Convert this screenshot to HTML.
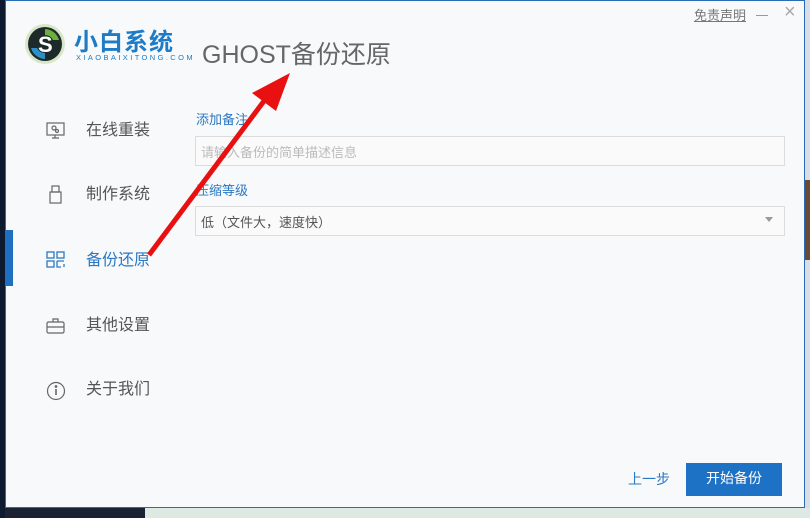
<!DOCTYPE html>
<html><head><meta charset="utf-8"><style>
*{margin:0;padding:0;box-sizing:border-box}
body{width:810px;height:518px;overflow:hidden;background:#1b2233;position:relative;font-family:"Liberation Sans","Noto Sans CJK SC",sans-serif}
.win{position:absolute;left:5px;top:0;width:800px;height:508px;background:#f8f9fa;border:1px solid #2a6cb8}
.t{position:absolute;white-space:nowrap}
.nav{position:absolute;left:80px;font-size:16px;color:#555}
.ic{position:absolute;left:40px}
.inp{position:absolute;left:189px;width:590px;height:30px;border:1px solid #dcdcdc;background:#fafafa;font-size:13px;color:#bbb;padding:5px 5px}
</style></head><body>
<div style="position:absolute;left:0;top:0;width:5px;height:518px;background:#0e1a30"></div>
<div style="position:absolute;left:805px;top:0;width:5px;height:518px;background:#d9dde4"></div>
<div style="position:absolute;left:805px;top:180px;width:5px;height:80px;background:#6a4a30"></div>
<div style="position:absolute;left:145px;top:508px;width:665px;height:10px;background:#dfe9e4"></div>
<div class="win">
 <svg style="position:absolute;left:18px;top:22px" width="42" height="42" viewBox="0 0 42 42"><circle cx="21" cy="21" r="20" fill="#d8e6c8"/><circle cx="21" cy="21" r="17" fill="#1c2a2a"/><path d="M21 6a15 15 0 0 1 14 11l-6 0a9 9 0 0 0-8-5z" fill="#6cb03a"/><path d="M21 36a15 15 0 0 1-14-11l6 0a9 9 0 0 0 8 5z" fill="#2e8fc8"/><text x="14" y="29" font-size="22" fill="#fff" font-weight="bold" font-family="Liberation Sans">S</text></svg>
 <div class="t" style="left:68px;top:21px;font-size:24px;color:#1e7bc6;font-weight:bold;letter-spacing:1px">小白系统</div>
 <div class="t" style="left:70px;top:52px;font-size:7.5px;color:#1e7bc6;letter-spacing:2.4px">XIAOBAIXITONG.COM</div>
 <div class="t" style="left:196px;top:34px;font-size:25px;color:#666">GHOST备份还原</div>
 <div class="t" style="left:688px;top:4px;font-size:13px;color:#777;text-decoration:underline">免责声明</div>
 <div style="position:absolute;left:750px;top:14px;width:12px;height:1px;background:#999"></div>
 <div class="t" style="left:778px;top:0px;font-size:20px;color:#aaa">×</div>

 <div style="position:absolute;left:0;top:229px;width:7px;height:56px;background:#1e6fc0"></div>
 <svg class="ic" style="top:121px" width="20" height="18" viewBox="0 0 20 18" fill="none" stroke="#666" stroke-width="1.2"><rect x="1" y="1" width="17" height="12"/><circle cx="8" cy="6" r="2"/><circle cx="11" cy="9" r="1.5"/><path d="M9 13v3M6 16h7"/></svg>
 <div class="nav" style="top:115px">在线重装</div>
 <svg class="ic" style="top:184px" width="20" height="20" viewBox="0 0 20 20" fill="none" stroke="#666" stroke-width="1.2"><rect x="6" y="1" width="7" height="6"/><rect x="4" y="7" width="11" height="11"/></svg>
 <div class="nav" style="top:179px">制作系统</div>
 <svg class="ic" style="top:250px" width="20" height="18" viewBox="0 0 20 18" fill="none" stroke="#2a78c2" stroke-width="1.3"><rect x="1" y="1" width="7" height="6"/><rect x="11" y="1" width="7" height="6"/><rect x="1" y="10" width="7" height="6"/><path d="M11 10h7M11 10v6h4M18 13v3"/></svg>
 <div class="nav" style="top:245px;color:#2a78c2">备份还原</div>
 <svg class="ic" style="top:316px" width="20" height="18" viewBox="0 0 20 18" fill="none" stroke="#666" stroke-width="1.2"><rect x="1" y="5" width="17" height="11" rx="1.5"/><path d="M7 5V2h5v3M1 10h17"/></svg>
 <div class="nav" style="top:310px">其他设置</div>
 <svg class="ic" style="top:380px" width="20" height="20" viewBox="0 0 20 20" fill="none" stroke="#666" stroke-width="1.2"><circle cx="10" cy="10" r="8.5"/><path d="M10 8v6" stroke-width="1.6"/><circle cx="10" cy="5.5" r=".8" fill="#666"/></svg>
 <div class="nav" style="top:374px">关于我们</div>

 <div class="t" style="left:190px;top:108px;font-size:13px;color:#2a78c2">添加备注</div>
 <div class="inp" style="top:135px">请输入备份的简单描述信息</div>
 <div class="t" style="left:190px;top:179px;font-size:13px;color:#2a78c2">压缩等级</div>
 <div class="inp" style="top:205px;color:#555">低（文件大，速度快）</div>
 <div style="position:absolute;left:759px;top:216px;border-left:4px solid transparent;border-right:4px solid transparent;border-top:5px solid #999"></div>

 <div class="t" style="left:622px;top:468px;font-size:14px;color:#2a78c2">上一步</div>
 <div style="position:absolute;left:680px;top:462px;width:96px;height:33px;background:#1e72c6;color:#fff;font-size:14px;text-align:center;line-height:31px">开始备份</div>

 <svg style="position:absolute;left:0;top:0" width="800" height="508"><line x1="143" y1="254" x2="258" y2="100" stroke="#e81010" stroke-width="5"/><polygon points="284,72 246,92 270,110" fill="#e81010"/></svg>
</div>
</body></html>
